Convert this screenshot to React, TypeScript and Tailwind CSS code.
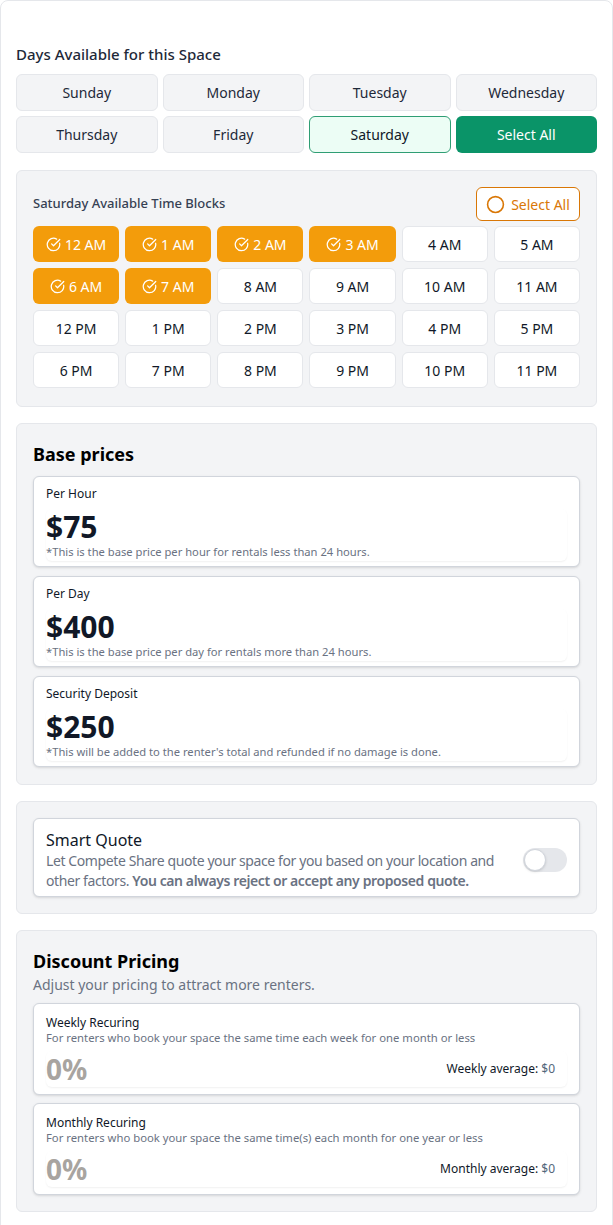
import React from "react";
import { CircleCheckBig, Circle } from "lucide-react";

const days = ["Sunday", "Monday", "Tuesday", "Wednesday", "Thursday", "Friday", "Saturday"];
const times = [
  "12 AM", "1 AM", "2 AM", "3 AM", "4 AM", "5 AM",
  "6 AM", "7 AM", "8 AM", "9 AM", "10 AM", "11 AM",
  "12 PM", "1 PM", "2 PM", "3 PM", "4 PM", "5 PM",
  "6 PM", "7 PM", "8 PM", "9 PM", "10 PM", "11 PM",
];
const selected = new Set(["12 AM", "1 AM", "2 AM", "3 AM", "6 AM", "7 AM"]);

function PriceCard({ label, price, note }: { label: string; price: string; note: string }) {
  return (
    <div className="rounded-md border border-gray-300 bg-white shadow-sm px-3 pt-[9px] pb-[5px]">
      <div className="text-[12px] leading-4 text-gray-900">{label}</div>
      <div className="mt-[7px] rounded-md shadow-[0_1px_2px_rgba(0,0,0,0.06)]">
        <div className="text-[30px] leading-9 font-bold text-[#111827]">{price}</div>
        <div className="text-[11.2px] leading-[14px] text-gray-500 pb-[2px]">{note}</div>
      </div>
    </div>
  );
}

function DiscountCard({ label, desc, avgLabel }: { label: string; desc: string; avgLabel: string }) {
  return (
    <div className="rounded-md border border-gray-300 bg-white shadow-sm px-3 pt-[11px] pb-[7px]">
      <div className="text-[12px] leading-[15px] text-gray-900">{label}</div>
      <div className="text-[11.3px] leading-4 text-gray-500">{desc}</div>
      <div className="mt-[5px] flex items-center justify-between rounded-md shadow-[0_1px_2px_rgba(0,0,0,0.06)] pr-3 h-[36px]">
        <div className="text-[28px] leading-9 font-bold text-[#a8a4a0]">0%</div>
        <div className="text-[12px] text-gray-900">
          {avgLabel} <span className="text-[#52667a]">$0</span>
        </div>
      </div>
    </div>
  );
}

export default function App() {
  return (
    <div
      className="min-h-[1240px] w-full border border-gray-200 rounded-lg bg-white px-[15px] pt-[43px] text-gray-900"
      style={{ fontFamily: '"Noto Sans", "Open Sans", sans-serif' }}
    >
      <div className="text-[15px] leading-5 font-medium text-gray-800">Days Available for this Space</div>
      <div className="mt-[10px] grid grid-cols-4 gap-[5px]">
        {days.map((d) => (
          <div
            key={d}
            className={
              d === "Saturday"
                ? "h-[37px] flex items-center justify-center rounded-md border border-[#2f9e74] bg-[#ecfdf5] text-[14px] text-gray-900"
                : "h-[37px] flex items-center justify-center rounded-md border border-gray-200 bg-gray-100 text-[14px] text-gray-800"
            }
          >
            {d}
          </div>
        ))}
        <div className="h-[37px] flex items-center justify-center rounded-md bg-[#0a9468] text-[14px] text-white">
          Select All
        </div>
      </div>

      <div className="mt-[17px] rounded-md border border-gray-200 bg-gray-100 px-4 pt-4 pb-[18px]">
        <div className="flex items-center justify-between h-[34px]">
          <div className="text-[13px] font-medium text-gray-700">Saturday Available Time Blocks</div>
          <div className="h-[34px] w-[104px] flex items-center justify-center gap-1.5 rounded-md border border-[#d97706] bg-white text-[14px] text-[#d97706]">
            <Circle size={19} strokeWidth={2} />
            Select All
          </div>
        </div>
        <div className="mt-[5px] grid grid-cols-6 gap-x-[6px] gap-y-[6px]">
          {times.map((t) =>
            selected.has(t) ? (
              <div
                key={t}
                className="h-[36px] flex items-center justify-center gap-1 rounded-md bg-[#f39c0b] text-[14px] text-white"
              >
                <CircleCheckBig size={15} strokeWidth={2} />
                {t}
              </div>
            ) : (
              <div
                key={t}
                className="h-[36px] flex items-center justify-center rounded-md border border-gray-200 bg-white text-[14px] text-gray-900"
              >
                {t}
              </div>
            )
          )}
        </div>
      </div>

      <div className="mt-4 rounded-md border border-gray-200 bg-gray-100 px-4 pt-4 pb-[17px]">
        <div className="text-[18px] leading-7 font-bold text-black">Base prices</div>
        <div className="mt-2 flex flex-col gap-[9px]">
          <PriceCard label="Per Hour" price="$75" note="*This is the base price per hour for rentals less than 24 hours." />
          <PriceCard label="Per Day" price="$400" note="*This is the base price per day for rentals more than 24 hours." />
          <PriceCard label="Security Deposit" price="$250" note="*This will be added to the renter's total and refunded if no damage is done." />
        </div>
      </div>

      <div className="mt-4 rounded-md border border-gray-200 bg-gray-100 p-4">
        <div className="rounded-md border border-gray-300 bg-white shadow-sm pl-3 pr-3 pt-[10px] pb-[5px] flex items-center justify-between">
          <div className="w-[470px]">
            <div className="text-[16px] leading-[22px] text-gray-900">Smart Quote</div>
            <div className="text-[14px] leading-5 tracking-[-0.4px] text-gray-500">
              Let Compete Share quote your space for you based on your location and other factors.{" "}
              <span className="font-semibold">You can always reject or accept any proposed quote.</span>
            </div>
          </div>
          <div className="w-[44px] h-[24px] rounded-full bg-gray-200 flex items-center p-[1px] shrink-0">
            <div className="w-[22px] h-[22px] rounded-full bg-white border border-gray-300 shadow-sm" />
          </div>
        </div>
      </div>

      <div className="mt-4 rounded-md border border-gray-200 bg-gray-100 px-4 pt-4 pb-4">
        <div className="text-[18px] leading-7 font-bold text-black">Discount Pricing</div>
        <div className="text-[14px] leading-5 text-gray-500">Adjust your pricing to attract more renters.</div>
        <div className="mt-2 flex flex-col gap-[8px]">
          <DiscountCard
            label="Weekly Recuring"
            desc="For renters who book your space the same time each week for one month or less"
            avgLabel="Weekly average:"
          />
          <DiscountCard
            label="Monthly Recuring"
            desc="For renters who book your space the same time(s) each month for one year or less"
            avgLabel="Monthly average:"
          />
        </div>
      </div>
    </div>
  );
}
